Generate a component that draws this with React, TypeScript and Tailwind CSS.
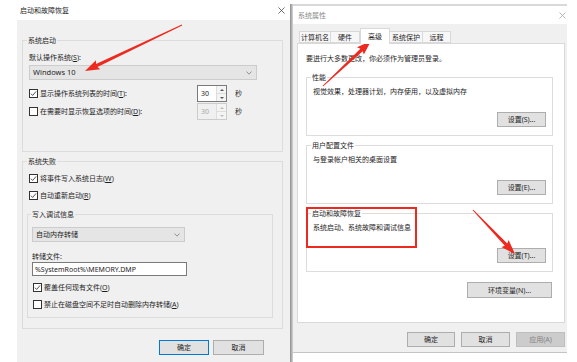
import React from "react"

type Pt = [number, number]

function arrowPoints(tail: Pt, tip: Pt) {
  const dx = tip[0] - tail[0]
  const dy = tip[1] - tail[1]
  const len = Math.hypot(dx, dy)
  const ux = dx / len
  const uy = dy / len
  const nx = -uy
  const ny = ux
  const headLen = 13
  const headW = 5
  const bx = tip[0] - ux * headLen
  const by = tip[1] - uy * headLen
  const pts: Pt[] = [
    [tail[0] + nx * 0.5, tail[1] + ny * 0.5],
    [bx + nx * 1.7, by + ny * 1.7],
    [bx + nx * headW - ux * 1.5, by + ny * headW - uy * 1.5],
    tip,
    [bx - nx * headW - ux * 1.5, by - ny * headW - uy * 1.5],
    [bx - nx * 1.7, by - ny * 1.7],
    [tail[0] - nx * 0.5, tail[1] - ny * 0.5],
  ]
  return pts.map((p) => p.join(",")).join(" ")
}

function CloseIcon({ className }: { className?: string }) {
  return (
    <svg viewBox="0 0 8 8" className={className} fill="none" stroke="currentColor" strokeWidth="0.8">
      <path d="M0.5 0.5 L7.5 7.5 M7.5 0.5 L0.5 7.5" />
    </svg>
  )
}

function Chevron() {
  return (
    <svg viewBox="0 0 8 5" className="h-[4px] w-[6px]" fill="none" stroke="#555" strokeWidth="0.8">
      <path d="M0.5 0.5 L4 4 L7.5 0.5" />
    </svg>
  )
}

function Check({ checked, children }: { checked?: boolean; children: React.ReactNode }) {
  return (
    <div className="flex h-[9px] items-center gap-[2px]">
      <span className="flex h-[9px] w-[9px] shrink-0 items-center justify-center border border-[#333333] bg-white">
        {checked && (
          <svg viewBox="0 0 8 8" className="h-[7px] w-[7px]">
            <path d="M1 4.2 L3 6.2 L7 1.6" fill="none" stroke="#222" strokeWidth="0.9" />
          </svg>
        )}
      </span>
      <span className="whitespace-nowrap">{children}</span>
    </div>
  )
}

function Select({ value, className }: { value: string; className: string }) {
  return (
    <div className={"flex items-center justify-between border border-[#cccccc] bg-[#e5e5e5] pl-[3px] pr-[4px] " + className}>
      <span>{value}</span>
      <Chevron />
    </div>
  )
}

function Spin({ disabled }: { disabled?: boolean }) {
  return (
    <div
      className={
        "flex h-[17px] w-[30px] items-stretch border " +
        (disabled ? "border-[#cccccc] bg-[#f0f0f0] text-[#a8a8a8]" : "border-[#7a7a7a] bg-white")
      }
    >
      <span className="flex flex-1 items-center pl-[3px]">30</span>
      <div className="flex w-[10px] flex-col border-l border-[#dddddd]">
        <span className="flex flex-1 items-center justify-center border-b border-[#dddddd] bg-[#f4f4f4]">
          <svg viewBox="0 0 4 2" className="h-[2px] w-[4px]"><path d="M0 2 L2 0 L4 2 Z" fill={disabled ? "#bbb" : "#555"} /></svg>
        </span>
        <span className="flex flex-1 items-center justify-center bg-[#f4f4f4]">
          <svg viewBox="0 0 4 2" className="h-[2px] w-[4px]"><path d="M0 0 L2 2 L4 0 Z" fill={disabled ? "#bbb" : "#555"} /></svg>
        </span>
      </div>
    </div>
  )
}

function Btn({
  children,
  className,
  focus,
  disabled,
}: {
  children: React.ReactNode
  className: string
  focus?: boolean
  disabled?: boolean
}) {
  return (
    <div
      className={
        "flex items-center justify-center border " +
        (disabled
          ? "border-[#bfbfbf] bg-[#cccccc] text-[#838383] "
          : focus
            ? "border-[#0078d7] bg-[#e1e1e1] "
            : "border-[#adadad] bg-[#e1e1e1] ") +
        className
      }
    >
      {children}
    </div>
  )
}

function U({ children }: { children: React.ReactNode }) {
  return <span className="underline">{children}</span>
}

function StartupDialog() {
  return (
    <div className="flex w-[290px] shrink-0 flex-col">
      <div className="flex h-[20px] items-center justify-between pl-[20px] pr-[5px]">
        <span>启动和故障恢复</span>
        <CloseIcon className="h-[7px] w-[7px] text-[#333]" />
      </div>
      <div className="ml-[17px] flex flex-1 flex-col bg-[#f0f0f0] pl-[5px] pr-[7px] pt-[16px]">
        <fieldset className="border border-[#dcdcdc] px-[6px] pb-[31px]">
          <legend className="-ml-[2px] px-[1px]">系统启动</legend>
          <div className="mt-[8px]">
            默认操作系统(<U>S</U>):
          </div>
          <Select value="Windows 10" className="mt-[3px] h-[15px] w-[228px] text-[7.5px]" />
          <div className="mt-[5px] flex items-center">
            <div className="w-[168px]">
              <Check checked>
                显示操作系统列表的时间(<U>T</U>):
              </Check>
            </div>
            <Spin />
            <span className="ml-[8px]">秒</span>
          </div>
          <div className="mt-[1px] flex items-center">
            <div className="w-[168px]">
              <Check>
                在需要时显示恢复选项的时间(<U>D</U>):
              </Check>
            </div>
            <Spin disabled />
            <span className="ml-[8px]">秒</span>
          </div>
        </fieldset>

        <fieldset className="mt-[5px] border border-[#dcdcdc] px-[6px] pb-[10px]">
          <legend className="-ml-[2px] px-[1px]">系统失败</legend>
          <div className="mt-[8px]">
            <Check checked>
              将事件写入系统日志(<U>W</U>)
            </Check>
          </div>
          <div className="mt-[8px]">
            <Check checked>
              自动重新启动(<U>R</U>)
            </Check>
          </div>
          <fieldset className="-ml-[2px] mr-[3px] mt-[10px] border border-[#dcdcdc] px-[4px] pb-[8px]">
            <legend className="-ml-[1px] px-[1px]">写入调试信息</legend>
            <Select value="自动内存转储" className="mt-[8px] h-[15px] w-[153px]" />
            <div className="mt-[10px]">转储文件:</div>
            <div className="mt-[1px] flex h-[14px] w-[155px] items-center border border-[#7a7a7a] bg-white pl-[2px]">
              %SystemRoot%\MEMORY.DMP
            </div>
            <div className="mt-[7px] pl-[1px]">
              <Check checked>
                覆盖任何现有文件(<U>O</U>)
              </Check>
            </div>
            <div className="mt-[8px] pl-[1px]">
              <Check>
                禁止在磁盘空间不足时自动删除内存转储(<U>A</U>)
              </Check>
            </div>
          </fieldset>
        </fieldset>

        <div className="mt-[11px] flex justify-end gap-[4px] pr-[19px]">
          <Btn focus className="h-[15px] w-[50px]">
            确定
          </Btn>
          <Btn className="h-[15px] w-[51px]">取消</Btn>
        </div>
      </div>
    </div>
  )
}

const tabs = [
  { name: "计算机名", w: "w-[32px]" },
  { name: "硬件", w: "w-[29px]" },
  { name: "高级", w: "w-[30px]", active: true },
  { name: "系统保护", w: "w-[33px]" },
  { name: "远程", w: "w-[28px]" },
]

function Group({
  title,
  text,
  button,
}: {
  title: string
  text: string
  button: React.ReactNode
}) {
  return (
    <fieldset className="flex flex-col border border-[#dcdcdc] px-[6px] pb-[8px]">
      <legend className="-ml-[2px] px-[1px]">{title}</legend>
      <div className="mt-[5px]">{text}</div>
      <Btn className="mt-[16px] h-[15px] w-[49px] self-end">{button}</Btn>
    </fieldset>
  )
}

function SystemDialog() {
  return (
    <div className="flex w-[274px] shrink-0 flex-col">
      <div className="mt-[4px] h-[2px] bg-[#d9d9d9]" />
      <div className="flex h-[18px] items-center justify-between bg-white pl-[5px] pr-[1px] text-[#8a8a8a]">
        <span>系统属性</span>
        <CloseIcon className="h-[7px] w-[7px] text-[#9a9a9a]" />
      </div>
      <div className="flex h-[329px] flex-col border-b border-[#c4c4c4] bg-[#f0f0f0] pt-[6px]">
        <div className="ml-[6px] flex h-[13px] items-end">
          {tabs.map((t) =>
            t.active ? (
              <div
                key={t.name}
                className={"relative z-10 -mb-px flex h-[16px] items-center justify-center border border-b-0 border-[#d9d9d9] bg-white " + t.w}
              >
                {t.name}
              </div>
            ) : (
              <div
                key={t.name}
                className={"flex h-[12px] items-center justify-center border border-l-0 border-[#d9d9d9] bg-[#f7f7f7] first:border-l " + t.w}
              >
                {t.name}
              </div>
            )
          )}
        </div>
        <div className="ml-[4px] mr-[2px] flex h-[280px] flex-col border border-[#d9d9d9] bg-white pl-[8px] pr-[11px]">
          <div className="mt-[10px]">要进行大多数更改，你必须作为管理员登录。</div>
          <div className="mt-[10px] flex flex-col gap-[5px]">
            <Group title="性能" text="视觉效果，处理器计划，内存使用，以及虚拟内存" button="设置(S)..." />
            <Group title="用户配置文件" text="与登录帐户相关的桌面设置" button="设置(E)..." />
            <Group title="启动和故障恢复" text="系统启动、系统故障和调试信息" button="设置(T)..." />
          </div>
          <Btn className="mr-[1px] mt-[10px] h-[16px] w-[85px] self-end">环境变量(N)...</Btn>
        </div>
        <div className="mt-[9px] flex gap-[6px] pl-[114px]">
          <Btn className="h-[15px] w-[48px]">确定</Btn>
          <Btn className="h-[15px] w-[49px]">取消</Btn>
          <Btn disabled className="h-[15px] w-[49px]">
            应用(A)
          </Btn>
        </div>
      </div>
    </div>
  )
}

export default function App() {
  return (
    <div className="relative flex h-[362px] w-[577px] overflow-hidden bg-white font-['Noto_Sans','Noto_Sans_CJK_SC',sans-serif] text-[7px] leading-[9px] text-[#1e1e1e]">
      <StartupDialog />
      <div className="mt-[4px] w-[3px] shrink-0 bg-gradient-to-r from-[#8c8c8c] to-[#d6d6d6]" />
      <SystemDialog />
      <div className="flex-1 bg-white" />

      {/* red markup on top of the screenshot */}
      <div className="pointer-events-none absolute left-[306px] top-[207px] h-[41px] w-[111px] border-2 border-[#ec2a1f]" />
      <svg className="pointer-events-none absolute inset-0" width="577" height="362">
        <polygon points={arrowPoints([182, 25], [85, 71])} fill="#ec2a1f" />
        <polygon points={arrowPoints([323, 86], [371, 41])} fill="#ec2a1f" />
        <polygon points={arrowPoints([473, 210], [515, 254])} fill="#ec2a1f" />
      </svg>
    </div>
  )
}
